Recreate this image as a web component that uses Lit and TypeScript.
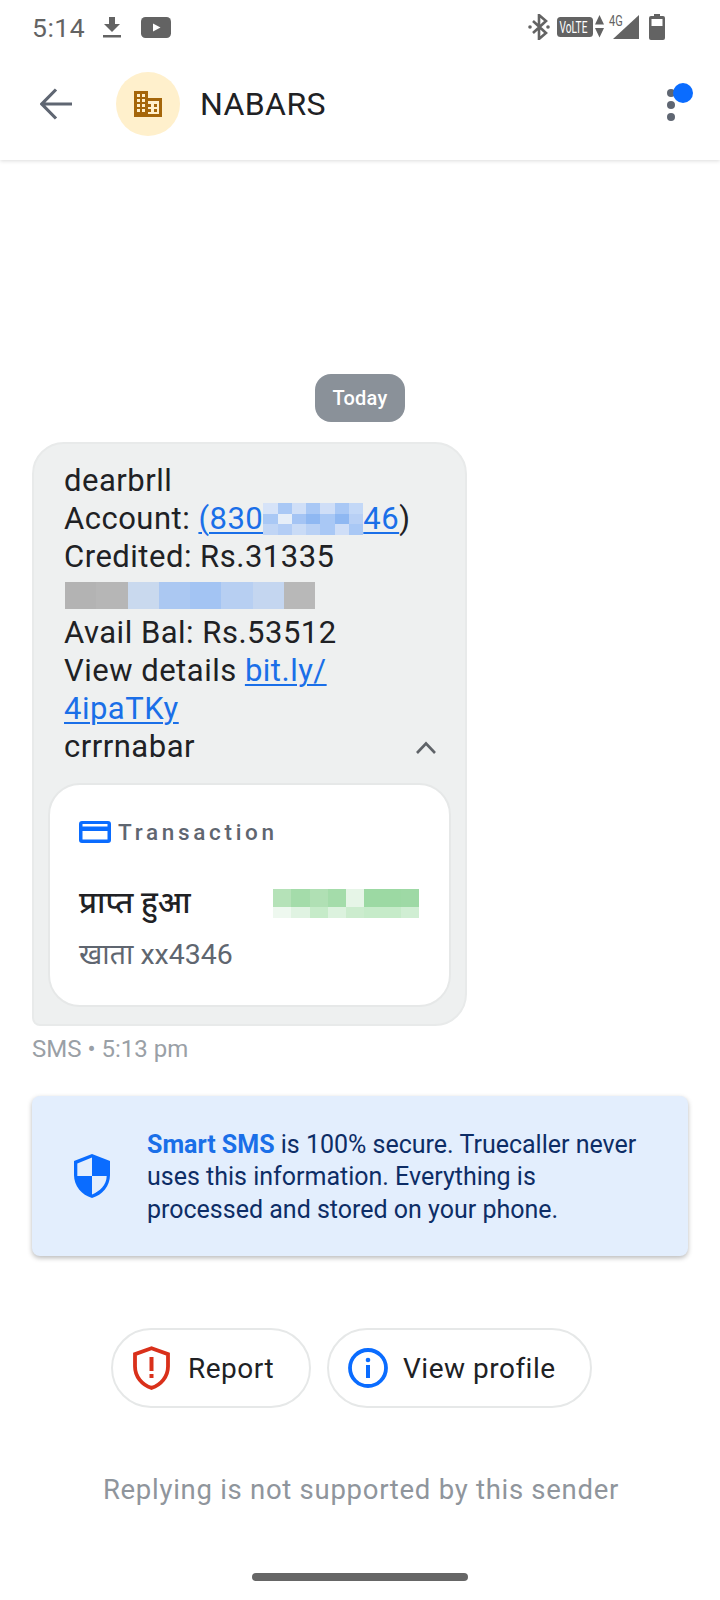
import { LitElement, html, css } from "lit";
import { customElement } from "lit/decorators.js";

const acct = [
  ["#d6e3f8","#a9c8f5","#d0dff7","#a9c8f5","#cfdef7","#a9c8f5","#c3d8f7"],
  ["#a9c8f5","#e6eef8","#a4c4f4","#8fb8f2","#a9c8f5","#8fb8f2","#b8d0f5"],
  ["#c0d5f5","#b3cdf5","#c9dbf6","#b9d1f5","#a9c8f5","#cfdef7","#a9c8f5"],
];
const line = ["#b3b3b3","#b6b6b6","#c9d9ee","#abc8f2","#a3c4f3","#b7cff2","#c4d6f0","#b8b8b8"];
const amt1 = ["#b5e2b8","#a4dcaa","#b0e0b4","#a4dcaa","#e6f5e7","#9cd9a3","#9cd9a3","#9ed9a5"];
const amt2 = ["#eef8ef","#e0f3e2","#c6ebc9","#dcf2de","#ccecce","#c6ebc9","#c6ebc9","#d0eed3"];

const cells = (colors: string[]) => colors.map((c) => html`<i style="background:${c}"></i>`);

@customElement("app-root")
export class AppRoot extends LitElement {
  static styles = css`
    :host { display: block; width: 720px; height: 1600px; background: #fff; font-family: Roboto, "Noto Sans", sans-serif; color: #202124; overflow: hidden; position: relative; }
    svg { display: block; flex: none; }
    .top { height: 160px; box-sizing: border-box; box-shadow: 0 1px 4px rgba(0,0,0,.14); display: flex; flex-direction: column; position: relative; }
    .status { height: 54px; display: flex; align-items: center; padding: 0 0 0 32px; color: #636363; }
    .time { font-size: 26.5px; width: 71px; letter-spacing: .5px; }
    .yt { margin-left: 20px; }
    .right { margin-left: auto; display: flex; align-items: center; }
    .bar { flex: 1; display: flex; align-items: center; padding: 0 23px 6px 40px; }
    .avatar { width: 64px; height: 64px; border-radius: 50%; background: #fff0cc; margin-left: 44px; display: flex; align-items: center; justify-content: center; }
    .name { font-size: 32px; margin-left: 20px; letter-spacing: .4px; font-weight: 400; }
    .menu { margin-left: auto; }
    .chipwrap { display: flex; justify-content: center; margin-top: 214px; }
    .chip { width: 90px; height: 48px; border-radius: 16px; background: #8a9199; color: #fff; font-size: 20px; font-weight: 500; display: flex; align-items: center; justify-content: center; letter-spacing: .2px; }
    .bubble { margin: 20px 0 0 32px; width: 435px; height: 584px; box-sizing: border-box; background: #eef0f0; border: 2px solid #e8eaea; border-radius: 32px 32px 32px 8px; padding: 18px 14px 0 14px; }
    .msg { font-size: 31px; line-height: 38px; padding-left: 16px; letter-spacing: .5px; color: #202124; }
    .msg a { color: #1a6fe8; text-decoration: underline; text-decoration-thickness: 2px; text-underline-offset: 3px; }
    .mosaic { display: inline-block; overflow: hidden; width: 100px; height: 32px; vertical-align: -6px; }
    .mosaic div { display: grid; grid-template-columns: repeat(7, 14.3px); grid-auto-rows: 10.7px; }
    .mosaic i, .strip i, .amt i { display: block; }
    .strip { display: grid; grid-template-columns: repeat(8, 31.25px); height: 27px; margin: 6px 0 5px 1px; }
    .last { display: flex; align-items: center; justify-content: space-between; padding-right: 15px; }
    .card { margin-top: 17px; height: 224px; box-sizing: border-box; background: #fff; border: 2px solid #e6e8e8; border-radius: 32px; padding: 35px 30px 0 29px; }
    .tx { display: flex; align-items: center; gap: 7px; font-size: 22.5px; font-weight: 500; letter-spacing: 3.7px; color: #5f6670; height: 24px; }
    .rcv { display: flex; justify-content: space-between; align-items: center; margin-top: 39px; }
    .rcvlabel { font-size: 31px; font-weight: 500; line-height: 40px; color: #202124; }
    .amt { display: grid; grid-template-columns: repeat(8, 18.25px); grid-template-rows: 18px 11px; }
    .acc { font-size: 28.5px; line-height: 36px; color: #5f6670; margin-top: 14px; }
    .meta { margin: 8px 0 0 32px; font-size: 24px; line-height: 30px; color: #9aa0a6; }
    .banner { margin: 32px 32px 0; height: 160px; background: #e3eefd; border-radius: 8px; box-shadow: 0 2px 5px rgba(0,0,0,.28); display: flex; align-items: center; padding-left: 42px; }
    .bantext { margin-left: 37px; padding-top: 3px; font-size: 25px; line-height: 32.5px; color: #0d2d66; }
    .bantext b { color: #1a6fe8; font-weight: 700; }
    .actions { display: flex; gap: 16px; margin: 72px 0 0 111px; }
    .pill { height: 80px; box-sizing: border-box; border: 2px solid #e6e8e8; border-radius: 40px; display: flex; align-items: center; font-size: 28px; letter-spacing: .5px; color: #202124; }
    .p1 { width: 200px; padding-left: 20px; gap: 18px; }
    .p2 { width: 265px; padding-left: 19px; gap: 15px; }
    .reply { text-align: center; font-size: 27.5px; letter-spacing: .72px; color: #8f959c; margin-top: 64px; line-height: 36px; padding-left: 2px; }
    .home { width: 216px; height: 8px; border-radius: 4px; background: #666; margin: 65px 0 0 252px; }
  `;

  render() {
    return html`
      <div class="top">
        <div class="status">
          <span class="time">5:14</span>
          <svg width="18" height="21" viewBox="0 0 18 21"><path fill="#636363" d="M6 0h6v7h5l-8 8-8-8h5zM0 18h18v2.400H0z"/></svg>
          <svg class="yt" width="30" height="21" viewBox="0 0 30 21"><rect width="30" height="21" rx="4.500" fill="#636363"/><path fill="#fff" d="M12 6.500l7.500 4-7.500 4z"/></svg>
          <div class="right">
            <svg width="22" height="26" viewBox="0 0 22 26"><path fill="none" stroke="#636363" stroke-width="2.600" d="M5 7l13 12-7 6V1l7 6L5 19"/><circle cx="2" cy="13" r="1.800" fill="#636363"/><circle cx="20" cy="13" r="1.800" fill="#636363"/></svg>
            <svg style="margin-left:7px" width="47" height="24" viewBox="0 0 47 24"><rect y="2" width="36" height="20" rx="3.500" fill="#636363"/><text transform="translate(2.500 18) scale(.78 1.25)" font-family="Roboto" font-size="13" fill="#fff">VoLTE</text><path fill="#636363" d="M42.500 0l4.500 9.500H38zM38 13h9l-4.500 9.500z"/></svg>
            <svg style="margin-left:4px" width="32" height="26" viewBox="0 0 32 26"><text transform="translate(1 12) scale(.85 1.1)" font-family="Roboto" font-size="13" fill="#636363">4G</text><path fill="#636363" d="M31 1v24H5z"/></svg>
            <svg style="margin-left:9px;margin-right:55px" width="16" height="26" viewBox="0 0 16 26"><path fill="#636363" fill-rule="evenodd" d="M5 0h6v2h3a2 2 0 012 2v20a2 2 0 01-2 2H2a2 2 0 01-2-2V4a2 2 0 012-2h3zM2.500 5v7h11V5z"/></svg>
          </div>
        </div>
        <div class="bar">
          <svg width="32" height="32" viewBox="0 0 32 32"><path fill="none" stroke="#5f6672" stroke-width="3.200" d="M32 16H3M16 1.500L1.800 16 16 30.500"/></svg>
          <div class="avatar">
            <svg width="28" height="26" viewBox="0 0 28 26"><path fill="#a5660a" fill-rule="evenodd" d="M0 0h14v7h14v19H0zM3 3v3h3V3zM8 3v3h3V3zM3 8v3h3V8zM8 8v3h3V8zM3 13v3h3v-3zM8 13v3h3v-3zM3 18v3h3v-3zM8 18v3h3v-3zM14 10v3h3v3h-3v2h3v3h-3v2h11V10zM20 13h3v3h-3zM20 18h3v3h-3z"/></svg>
          </div>
          <span class="name">NABARS</span>
          <svg class="menu" width="32" height="42" viewBox="0 0 32 42"><circle cx="6" cy="10" r="4" fill="#5f6672"/><circle cx="6" cy="22" r="4" fill="#5f6672"/><circle cx="6" cy="34" r="4" fill="#5f6672"/><circle cx="18" cy="10" r="10" fill="#0a6cff"/></svg>
        </div>
      </div>

      <div class="chipwrap"><div class="chip">Today</div></div>

      <div class="bubble">
        <div class="msg">
          <div>dearbrll</div>
          <div>Account: <a>(830<span class="mosaic"><div>${cells(acct.flat())}</div></span>46</a>)</div>
          <div>Credited: Rs.31335</div>
          <div class="strip">${cells(line)}</div>
          <div>Avail Bal: Rs.53512</div>
          <div>View details <a>bit.ly/</a></div>
          <div><a>4ipaTKy</a></div>
          <div class="last">
            <span>crrrnabar</span>
            <svg width="20" height="13" viewBox="0 0 20 13"><path fill="none" stroke="#5f6368" stroke-width="2.600" d="M1 12l9-9.500 9 9.500"/></svg>
          </div>
        </div>
        <div class="card">
          <div class="tx">
            <svg width="32" height="22" viewBox="0 0 32 22"><path fill="#0a6cff" fill-rule="evenodd" d="M3 0h26a3 3 0 013 3v16a3 3 0 01-3 3H3a3 3 0 01-3-3V3a3 3 0 013-3zM3.500 3v2.500h25V3zM3.500 10v8.500h25V10z"/></svg>
            <span>Transaction</span>
          </div>
          <div class="rcv">
            <span class="rcvlabel">प्राप्त हुआ</span>
            <div class="amt">${cells(amt1)}${cells(amt2)}</div>
          </div>
          <div class="acc">खाता xx4346</div>
        </div>
      </div>
      <div class="meta">SMS • 5:13 pm</div>

      <div class="banner">
        <svg width="36" height="44" viewBox="0 0 38 44" preserveAspectRatio="none"><path fill="#0a6cff" d="M19 0L0 7v14c0 11 8 20 19 23 11-3 19-12 19-23V7z"/><path fill="#e3eefd" d="M19 3.500L3.500 9.500V22H19zM19 22v18.500c8-3 15.500-9.500 15.500-18.500z"/></svg>
        <div class="bantext"><b>Smart SMS</b> is 100% secure. Truecaller never<br />uses this information. Everything is<br />processed and stored on your phone.</div>
      </div>

      <div class="actions">
        <div class="pill p1">
          <svg width="37" height="44" viewBox="0 0 37 44"><path fill="none" stroke="#d9301a" stroke-width="3.800" d="M18.500 2.200L2 8.200v12.300c0 10 7 18.500 16.500 21.400C28 39 35 30.500 35 20.500V8.200z"/><path fill="#d9301a" d="M16.500 11h4v14h-4zM16.500 28h4v4h-4z"/></svg>
          <span>Report</span>
        </div>
        <div class="pill p2">
          <svg width="40" height="40" viewBox="0 0 40 40"><circle cx="20" cy="20" r="18" fill="none" stroke="#0a6cff" stroke-width="3.800"/><path fill="#0a6cff" d="M18 17h4v13h-4z"/><circle cx="20" cy="12" r="2.300" fill="#0a6cff"/></svg>
          <span>View profile</span>
        </div>
      </div>

      <div class="reply">Replying is not supported by this sender</div>
      <div class="home"></div>
    `;
  }
}
